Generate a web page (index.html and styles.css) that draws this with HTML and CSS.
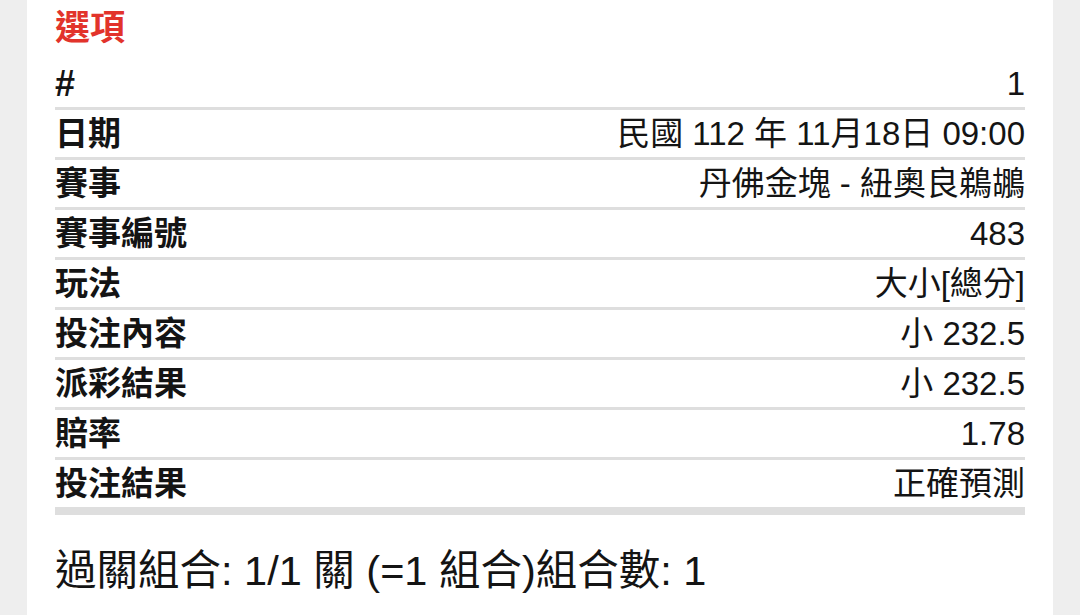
FILE: index.html
```html
<!DOCTYPE html>
<html lang="zh-Hant">
<head>
<meta charset="utf-8">
<title>選項</title>
<link rel="stylesheet" href="styles.css">
</head>
<body>
<main class="card">
  <h1 class="title">選項</h1>
  <div class="table">
    <div class="row"><span class="label label-hash">#</span><span class="value">1</span></div>
    <div class="row"><span class="label">日期</span><span class="value">民國 112 年 11月18日 09:00</span></div>
    <div class="row"><span class="label">賽事</span><span class="value">丹佛金塊 - 紐奧良鵜鶘</span></div>
    <div class="row"><span class="label">賽事編號</span><span class="value">483</span></div>
    <div class="row"><span class="label">玩法</span><span class="value">大小[總分]</span></div>
    <div class="row"><span class="label">投注內容</span><span class="value">小 232.5</span></div>
    <div class="row"><span class="label">派彩結果</span><span class="value">小 232.5</span></div>
    <div class="row"><span class="label">賠率</span><span class="value">1.78</span></div>
    <div class="row row-last"><span class="label">投注結果</span><span class="value">正確預測</span></div>
  </div>
  <p class="summary">過關組合: 1/1 關 (=1 組合)組合數: 1</p>
</main>
</body>
</html>
```

FILE: styles.css
```css
html, body {
  margin: 0;
  padding: 0;
}

body {
  background: #eeeeee;
  font-family: "Liberation Sans", "Noto Sans CJK TC", sans-serif;
  color: #141414;
}

.card {
  margin: 0 27px;
  min-height: 615px;
  background: #ffffff;
  padding: 0 28px;
  box-sizing: border-box;
}

.title {
  margin: 0;
  height: 60px;
  line-height: 56px;
  font-size: 35px;
  font-weight: 700;
  color: #e2332b;
}

.table {
  display: flex;
  flex-direction: column;
}

.row {
  display: flex;
  justify-content: space-between;
  align-items: center;
  height: 47px;
  border-bottom: 3px solid #dedede;
}

.row-last {
  border-bottom: 8px solid #dedede;
}

.label {
  font-size: 33px;
  font-weight: 700;
  line-height: 47px;
}

.label-hash {
  font-size: 36px;
}

.value {
  font-size: 33px;
  font-weight: 400;
  line-height: 47px;
}

.summary {
  margin: 0;
  padding-top: 30px;
  line-height: 52px;
  font-size: 41.5px;
}
```
